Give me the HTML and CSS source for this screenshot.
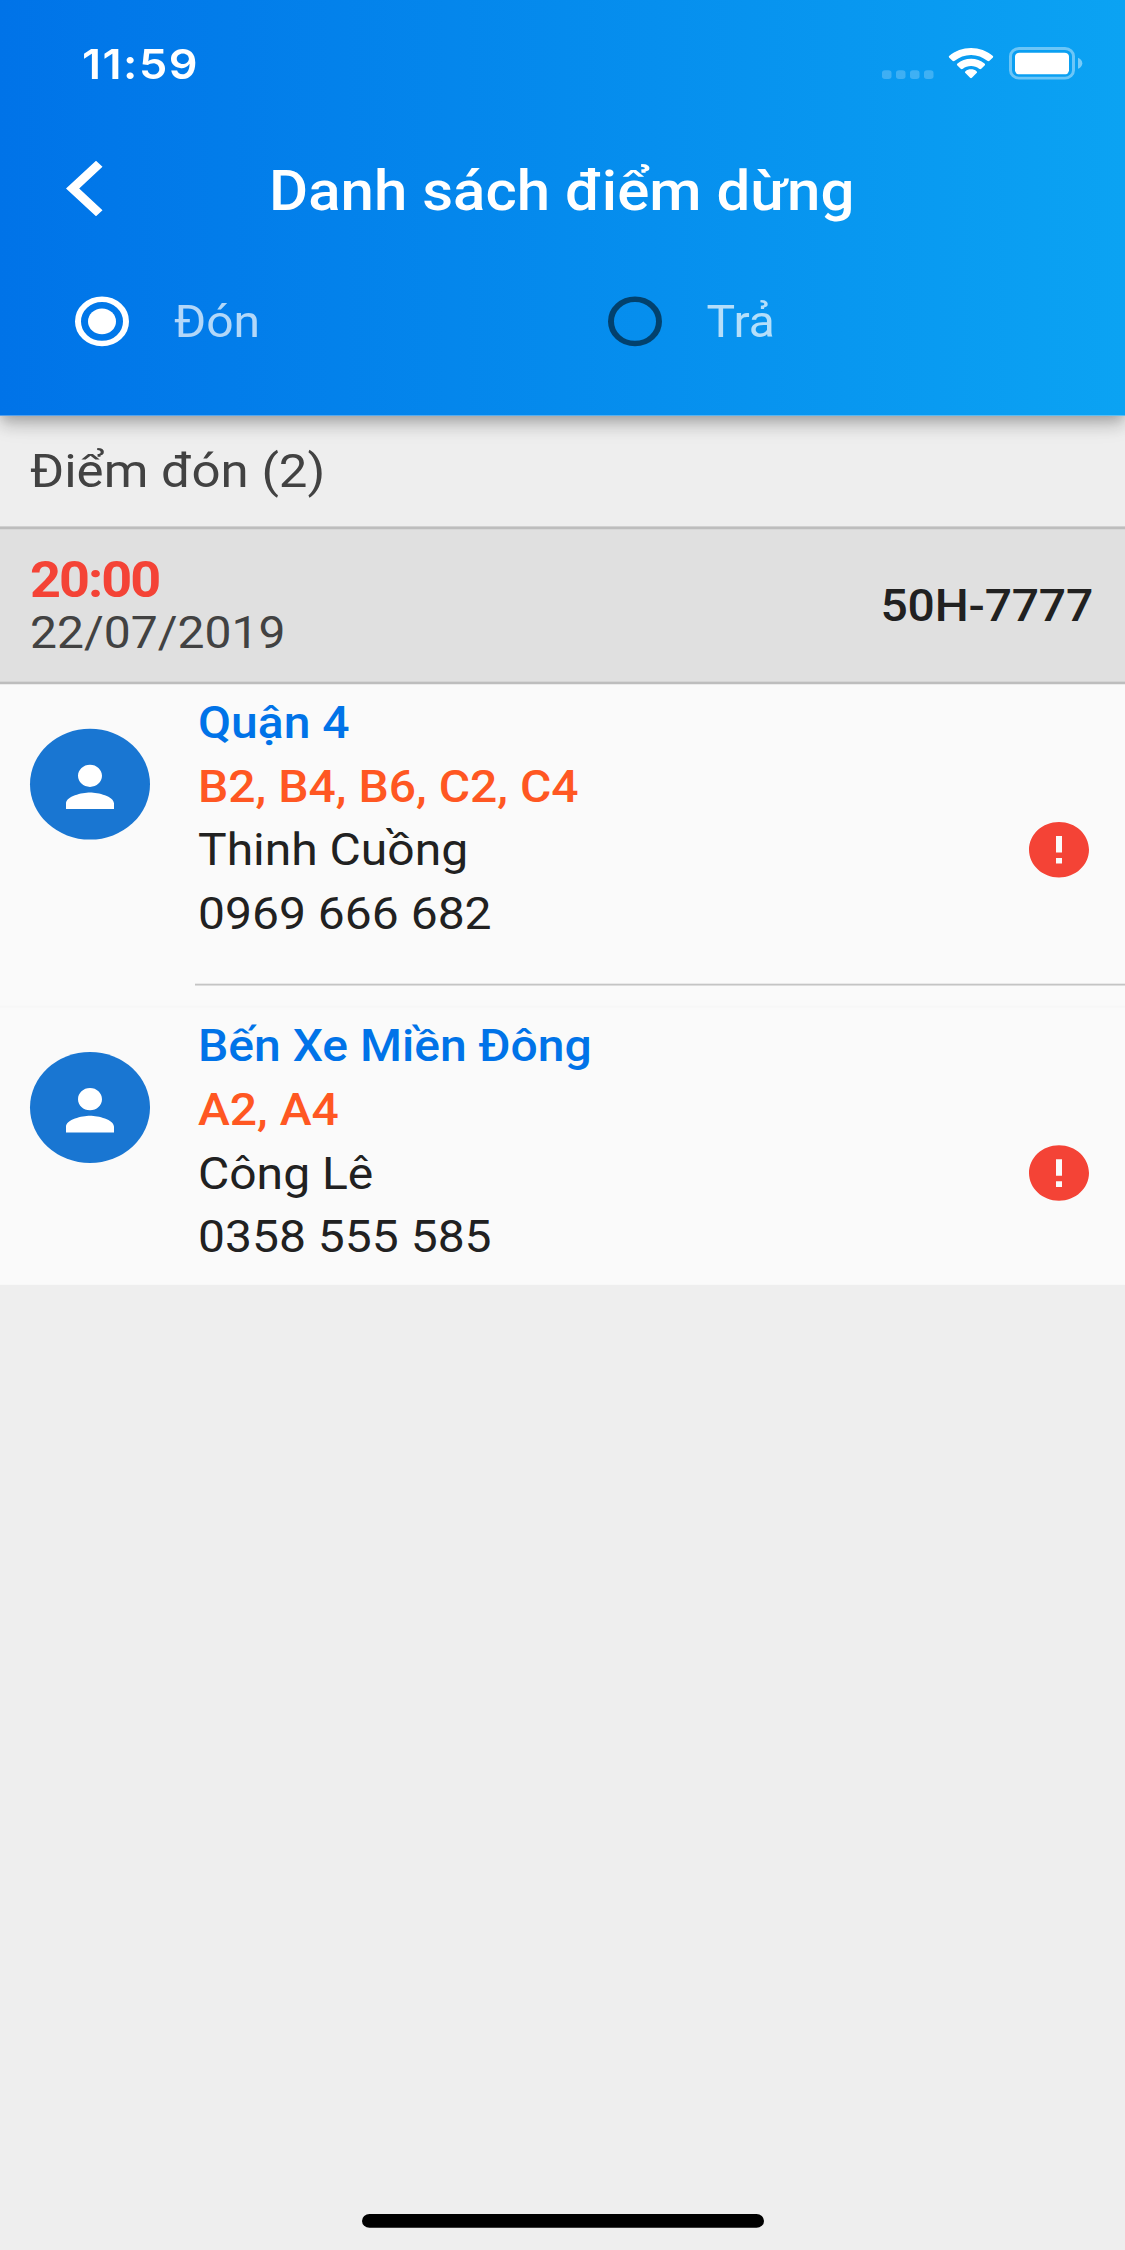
FILE: index.html
```html
<!DOCTYPE html>
<html lang="vi">
<head>
    <meta charset="UTF-8">
    <meta name="viewport" content="width=device-width, initial-scale=1.0">
    <title>Danh sách điểm dừng</title>
    <link rel="stylesheet" href="styles.css">
</head>
<body>
    <div class="screen">
        <div class="app">
            <header class="header">
                <div class="status-bar">
                    <span class="time">11:59</span>
                    <svg class="status-icons" viewBox="0 0 204 36" fill="#fff">
                        <!-- No signal -->
                        <g opacity="0.22">
                            <rect x="2" y="25" width="9.5" height="9.5" rx="3"/>
                            <rect x="16" y="25" width="9.5" height="9.5" rx="3"/>
                            <rect x="30" y="25" width="9.5" height="9.5" rx="3"/>
                            <rect x="44" y="25" width="9.5" height="9.5" rx="3"/>
                        </g>
                        <!-- Wifi -->
                        <path d="M91 1c8.300 0 15.900 3.200 21.600 8.400.8.700.8 1.500.1 2.200l-3.200 3.300c-.7.700-1.500.7-2.200 0C102.900 11 97.200 8.600 91 8.600s-11.900 2.400-16.300 6.300c-.7.700-1.500.7-2.200 0l-3.200-3.300c-.7-.7-.7-1.500.1-2.200C75.100 4.200 82.700 1 91 1z"/>
                        <path d="M91 12.500c5.200 0 9.900 2 13.500 5.300.8.700.8 1.500.1 2.200l-3.300 3.400c-.7.700-1.400.7-2.200.1-2.200-1.900-5-3-8.100-3s-5.900 1.100-8.100 3c-.8.600-1.500.6-2.200-.1l-3.300-3.400c-.7-.7-.7-1.500.1-2.200 3.600-3.300 8.300-5.300 13.500-5.300z"/>
                        <path d="M91 24.100c2.100 0 4 .7 5.500 2 .7.600.7 1.300.1 2l-4.700 5.100c-.6.600-1.200.6-1.800 0l-4.700-5.100c-.6-.7-.6-1.400.1-2 1.500-1.300 3.400-2 5.500-2z"/>
                        <!-- Battery -->
                        <rect x="130.500" y="1.500" width="63" height="32" rx="8.500" fill="none" stroke="#fff" stroke-width="3" opacity="0.4"/>
                        <rect x="135" y="6" width="54" height="23.500" rx="4.500"/>
                        <path d="M198 11.500c2.600 1 4.300 3.300 4.300 6s-1.700 5-4.300 6z" opacity="0.45"/>
                    </svg>
                </div>

                <div class="toolbar">
                    <svg class="back" viewBox="0 0 37 60" fill="#fff">
                        <path d="M30 0l6.500 6.500L13.200 30l23.300 23.500L30 60 0 30z"/>
                    </svg>
                    <h1 class="title">Danh sách điểm dừng</h1>
                </div>

                <div class="tabs">
                    <div class="radio-item">
                        <span class="radio checked"></span>
                        <span class="radio-label">Đón</span>
                    </div>
                    <div class="radio-item">
                        <span class="radio"></span>
                        <span class="radio-label">Trả</span>
                    </div>
                </div>
            </header>

            <h2 class="section-title">Điểm đón (2)</h2>

            <div class="trip">
                <div class="trip-info">
                    <div class="trip-time">20:00</div>
                    <div class="trip-date">22/07/2019</div>
                </div>
                <div class="plate">50H-7777</div>
            </div>

            <div class="stop-list">
                <div class="stop">
                    <div class="avatar">
                        <svg viewBox="0 0 24 24" fill="#fff"><path d="M12 12c2.210 0 4-1.790 4-4s-1.790-4-4-4-4 1.790-4 4 1.790 4 4 4zm0 2c-2.670 0-8 1.340-8 4v2h16v-2c0-2.660-5.330-4-8-4z"/></svg>
                    </div>
                    <div class="details">
                        <div class="place">Quận 4</div>
                        <div class="seats">B2, B4, B6, C2, C4</div>
                        <div class="name">Thinh Cuồng</div>
                        <div class="phone">0969 666 682</div>
                    </div>
                    <svg class="alert" viewBox="0 0 24 24" fill="#f44336"><path d="M12 2C6.480 2 2 6.480 2 12s4.480 10 10 10 10-4.480 10-10S17.520 2 12 2zm1 15h-2v-2h2v2zm0-4h-2V7h2v6z"/></svg>
                </div>
                <div class="divider"></div>
                <div class="stop">
                    <div class="avatar">
                        <svg viewBox="0 0 24 24" fill="#fff"><path d="M12 12c2.210 0 4-1.790 4-4s-1.790-4-4-4-4 1.790-4 4 1.790 4 4 4zm0 2c-2.670 0-8 1.340-8 4v2h16v-2c0-2.660-5.330-4-8-4z"/></svg>
                    </div>
                    <div class="details">
                        <div class="place">Bến Xe Miền Đông</div>
                        <div class="seats">A2, A4</div>
                        <div class="name">Công Lê</div>
                        <div class="phone">0358 555 585</div>
                    </div>
                    <svg class="alert" viewBox="0 0 24 24" fill="#f44336"><path d="M12 2C6.480 2 2 6.480 2 12s4.480 10 10 10 10-4.480 10-10S17.520 2 12 2zm1 15h-2v-2h2v2zm0-4h-2V7h2v6z"/></svg>
                </div>
            </div>

            <div class="home-bar"></div>
        </div>
    </div>
</body>
</html>
```
FILE: styles.css
```css
* {
    box-sizing: border-box;
}

body {
    margin: 0;
    font-family: Roboto, sans-serif;
    background: #eeeeee;
    color: #212121;
}

.screen {
    width: 1125px;
    height: 2250px;
    overflow: hidden;
}

/* 1125x2436 phone layout fitted to the 2250px high screen */
.app {
    display: flex;
    flex-direction: column;
    width: 1125px;
    height: 2436px;
    transform: scaleY(0.92365);
    transform-origin: 0 0;
    background: #eeeeee;
}

/* Header */
.header {
    position: relative;
    height: 450px;
    flex-shrink: 0;
    background: linear-gradient(to right, #0073e8, #058bed 50%, #0ba3f3);
    color: white;
    box-shadow: 0 6px 12px -3px rgba(0, 0, 0, 0.2), 0 12px 15px rgba(0, 0, 0, 0.14), 0 3px 30px rgba(0, 0, 0, 0.12);
}

.status-bar {
    display: flex;
    justify-content: space-between;
    align-items: center;
    height: 138px;
    padding: 0 41px 0 82px;
}

.time {
    font-family: Inter, sans-serif;
    font-size: 45px;
    font-weight: 600;
    line-height: 54px;
    letter-spacing: 1.5px;
}

.status-icons {
    width: 204px;
    height: 36px;
}

.toolbar {
    display: flex;
    align-items: center;
    height: 138px;
    padding-left: 66px;
}

.back {
    width: 37px;
    height: 60px;
    margin-top: -6px;
}

.title {
    margin: 0 0 0 166px;
    font-size: 60px;
    font-weight: 500;
    line-height: 70px;
    white-space: nowrap;
}

.tabs {
    display: flex;
    padding: 42px 0 0 75px;
}

.radio-item {
    display: flex;
    flex-shrink: 0;
    align-items: center;
    gap: 45px;
    width: 532.5px;
    height: 60px;
}

.radio {
    display: flex;
    align-items: center;
    justify-content: center;
    width: 54px;
    height: 54px;
    border: 6px solid rgba(0, 0, 0, 0.54);
    border-radius: 50%;
}

.radio.checked {
    border-color: white;
}

.radio.checked::after {
    content: "";
    width: 28px;
    height: 28px;
    border-radius: 50%;
    background: white;
}

.radio-label {
    font-size: 48px;
    color: rgba(255, 255, 255, 0.7);
}

/* Trip */
.section-title {
    height: 120px;
    margin: 0;
    padding-left: 30px;
    font-size: 51px;
    font-weight: 400;
    line-height: 120px;
    color: #424242;
}

.trip {
    display: flex;
    justify-content: space-between;
    align-items: center;
    height: 171px;
    padding: 0 32px 0 30px;
    border-top: 3px solid #bdbdbd;
    border-bottom: 3px solid #bdbdbd;
    background: #e0e0e0;
}

.trip-time {
    font-size: 54px;
    font-weight: 700;
    line-height: 58px;
    letter-spacing: -2px;
    color: #f44336;
}

.trip-date {
    padding-top: 2px;
    font-size: 48px;
    line-height: 54px;
    color: #424242;
}

.plate {
    font-size: 48px;
    font-weight: 500;
    letter-spacing: -0.2px;
}

/* Stops */
.stop-list {
    background: #fafafa;
}

.stop {
    display: flex;
    align-items: flex-start;
    height: 300px;
    padding: 6px 30px 0;
}

.avatar {
    display: flex;
    align-items: center;
    justify-content: center;
    width: 120px;
    height: 120px;
    margin-top: 42px;
    padding-top: 6px;
    border-radius: 50%;
    background: #1976d2;
}

.avatar svg {
    width: 72px;
    height: 72px;
}

.details {
    flex: 1;
    margin: 1px 0 0 48px;
    font-size: 48px;
    line-height: 69px;
}

.place {
    font-weight: 500;
    color: #0073e8;
}

.seats {
    font-weight: 500;
    color: #ff5722;
}

.alert {
    width: 72px;
    height: 72px;
    margin-top: 137px;
}

.divider {
    height: 50px;
    padding: 24px 0 0 195px;
    border-bottom: 2px solid #f7f7f7;
}

.divider::before {
    content: "";
    display: block;
    height: 2px;
    background: #c4c4c4;
}

.home-bar {
    width: 402px;
    height: 15px;
    margin: auto auto 24px;
    border-radius: 8px;
    background: black;
}
```
